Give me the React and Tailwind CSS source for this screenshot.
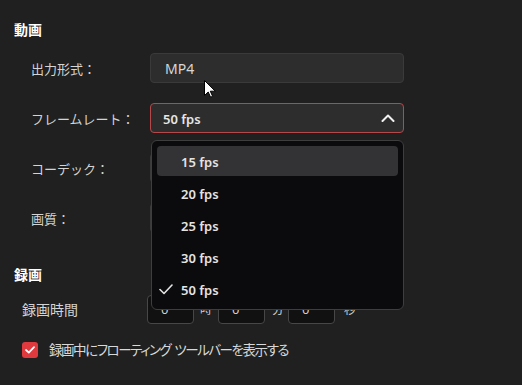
import React from 'react';

const fpsOptions = ['15 fps', '20 fps', '25 fps', '30 fps', '50 fps'];

function Label({ children }) {
  return <div className="flex items-center h-[30px] pt-[3px] text-[13px] text-[#d4d4d4]">{children}</div>;
}

function TimeBox() {
  return (
    <div className="w-[47px] h-[29px] rounded-[4px] border border-[#474747] bg-[#111112] text-[13px] text-[#cfcfcf] flex items-center pl-[13px]">
      0
    </div>
  );
}

export default function App() {
  const selected = '50 fps';
  const hovered = '15 fps';

  return (
    <div className="relative w-[522px] h-[385px] overflow-hidden bg-[#202020] text-white font-['Noto_Sans','Noto_Sans_CJK_JP',sans-serif]">
      {/* 動画 */}
      <div className="pl-[14px] pt-[21px] text-[14px] font-bold leading-[18px]">動画</div>

      <div className="grid grid-cols-[119px_254px] pl-[31px] mt-[14px] gap-y-[20px]">
        <Label>出力形式：</Label>
        <div className="h-[30px] rounded-[4px] border border-[#3a3a3a] bg-[#2d2d2d] flex items-center pl-[14px] pt-[1px] text-[14px] text-[#d6d6d6]">
          MP4
        </div>

        <Label>フレームレート：</Label>
        <div className="h-[30px] rounded-[4px] border border-[#b4484a] bg-[#2d2d2d] flex items-center justify-between pl-[12px] pr-[8px] text-[13px] font-semibold text-[#e6e6e6]">
          <span className="pt-[3px]">50 fps</span>
          <svg width="14" height="8" viewBox="0 0 14 8" fill="none">
            <path d="M1.5 7L7 1.5L12.5 7" stroke="#f0f0f0" strokeWidth="2" strokeLinecap="round" strokeLinejoin="round" />
          </svg>
        </div>

        <Label>コーデック：</Label>
        <div className="h-[30px] rounded-[4px] border border-[#3a3a3a] bg-[#2d2d2d]" />

        <Label>画質：</Label>
        <div className="h-[30px] rounded-[4px] border border-[#3a3a3a] bg-[#2d2d2d]" />
      </div>

      {/* 録画 */}
      <div className="pl-[14px] mt-[33px] text-[14px] font-bold leading-[18px]">録画</div>

      <div className="flex items-center mt-[11px] pl-[22px]">
        <div className="w-[125px] text-[14px] text-[#d4d4d4]">録画時間</div>
        <TimeBox />
        <span className="w-[24px] pl-[6px] text-[12px] text-[#cfcfcf]">時</span>
        <TimeBox />
        <span className="w-[23px] pl-[7px] text-[12px] text-[#cfcfcf]">分</span>
        <TimeBox />
        <span className="pl-[9px] text-[12px] text-[#cfcfcf]">秒</span>
      </div>

      <div className="flex items-center mt-[16px] pl-[22px] gap-[11px]">
        <div className="w-[16px] h-[16px] rounded-[3px] bg-[#e0393e] flex items-center justify-center">
          <svg width="10" height="8" viewBox="0 0 10 8" fill="none">
            <path d="M1 4L3.8 6.6L9 1.2" stroke="white" strokeWidth="1.8" strokeLinecap="round" strokeLinejoin="round" />
          </svg>
        </div>
        <span className="flex gap-[4px] text-[13.5px] leading-[20px] text-[#d8d8d8] [font-feature-settings:'palt'] tracking-[-1.45px]">
          <span>録画中にフローティング</span>
          <span>ツールバーを表示する</span>
        </span>
      </div>

      {/* open dropdown */}
      <div className="absolute left-[151px] top-[140px] w-[253px] h-[170px] rounded-[6px] border border-[#3e3e3e] bg-[#0b0b0d] px-[5px] pt-[5px] flex flex-col gap-[2px]">
        {fpsOptions.map((opt) => (
          <div
            key={opt}
            className={`relative h-[30px] rounded-[4px] flex items-center pl-[24px] text-[13px] font-semibold text-[#e4e4e4] ${opt === hovered ? 'bg-[#333335]' : ''}`}
          >
            {opt === selected && (
              <svg className="absolute left-[2px] top-[10px]" width="14" height="11" viewBox="0 0 14 11" fill="none">
                <path d="M1 5.5L5 9.5L13 1" stroke="#e4e4e4" strokeWidth="1.6" strokeLinecap="round" strokeLinejoin="round" />
              </svg>
            )}
            <span className="pt-[3px]">{opt}</span>
          </div>
        ))}
      </div>

      {/* mouse cursor */}
      <svg className="absolute left-[204px] top-[80px]" width="12" height="18" viewBox="0 0 12 18">
        <path d="M0.5 0.5V15.5L4.2 12L6.6 17.2L8.6 16.3L6.3 11.2H11.3Z" fill="white" stroke="black" strokeWidth="1" strokeLinejoin="round" />
      </svg>
    </div>
  );
}
